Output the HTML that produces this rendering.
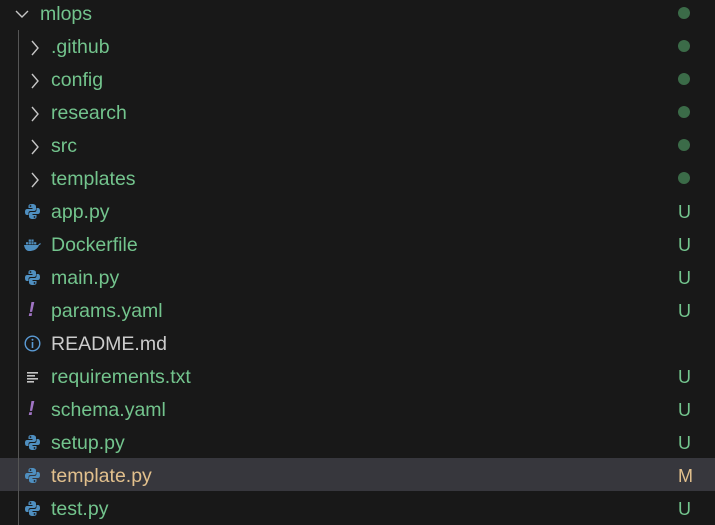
<!DOCTYPE html>
<html><head><meta charset="utf-8"><style>
html,body{margin:0;padding:0;width:715px;height:525px;overflow:hidden;background:#181818;}
body{position:relative;font-family:"Liberation Sans",sans-serif;font-size:19.5px;}
.row{position:absolute;left:0;width:715px;height:33px;}
.row .t{position:absolute;top:6px;left:51px;color:#73c48d;line-height:22px;}
.row .b{position:absolute;right:24px;top:6px;line-height:22px;color:#73c48d;font-size:18px;}
.dot{position:absolute;left:678px;top:10px;width:12px;height:12px;border-radius:50%;background:#3b6b48;}
.ic{position:absolute;left:24px;top:8px;width:17px;height:17px;}
.chev{position:absolute;left:30px;top:10px;}
.guide{position:absolute;left:18px;top:30px;width:1px;height:495px;background:#555;}
</style></head><body>
<div class="row" style="top:458px;background:#37373d"></div>
<div class="guide"></div>

<div class="row" style="top:-3px">
<svg class="chev" style="left:14px;top:11px" width="16" height="12" viewBox="0 0 16 12"><path d="M2 3 L8 9 L14 3" stroke="#c5c5c5" stroke-width="1.4" fill="none"/></svg>
<span class="t" style="left:40px">mlops</span><div class="dot"></div></div>

<div class="row" style="top:30px"><svg class="chev" width="10" height="16" viewBox="0 0 10 16"><path d="M2 1 L8 8 L2 15" stroke="#c5c5c5" stroke-width="1.4" fill="none"/></svg><span class="t">.github</span><div class="dot"></div></div>
<div class="row" style="top:63px"><svg class="chev" width="10" height="16" viewBox="0 0 10 16"><path d="M2 1 L8 8 L2 15" stroke="#c5c5c5" stroke-width="1.4" fill="none"/></svg><span class="t">config</span><div class="dot"></div></div>
<div class="row" style="top:96px"><svg class="chev" width="10" height="16" viewBox="0 0 10 16"><path d="M2 1 L8 8 L2 15" stroke="#c5c5c5" stroke-width="1.4" fill="none"/></svg><span class="t">research</span><div class="dot"></div></div>
<div class="row" style="top:129px"><svg class="chev" width="10" height="16" viewBox="0 0 10 16"><path d="M2 1 L8 8 L2 15" stroke="#c5c5c5" stroke-width="1.4" fill="none"/></svg><span class="t">src</span><div class="dot"></div></div>
<div class="row" style="top:162px"><svg class="chev" width="10" height="16" viewBox="0 0 10 16"><path d="M2 1 L8 8 L2 15" stroke="#c5c5c5" stroke-width="1.4" fill="none"/></svg><span class="t">templates</span><div class="dot"></div></div>

<svg width="0" height="0" style="position:absolute"><defs>
<g id="py"><path d="M8 1 C4.5 1 4.5 2.5 4.5 3.5 V5 H8.5 V6 H3 C1.5 6 1 7.5 1 9 C1 10.5 1.5 12 3 12 H4.5 V10 C4.5 8.8 5.3 8 6.5 8 H10 C11.2 8 12 7.2 12 6 V3.5 C12 2 10.5 1 8 1Z" fill="#4f8fc0"/><path d="M9 16 C12.5 16 12.5 14.5 12.5 13.5 V12 H8.5 V11 H14 C15.5 11 16 9.5 16 8 C16 6.5 15.5 5 14 5 H12.5 V7 C12.5 8.2 11.7 9 10.5 9 H7 C5.8 9 5 9.8 5 11 V13.5 C5 15 6.5 16 9 16Z" fill="#4f8fc0"/><circle cx="6.5" cy="3" r="0.9" fill="#181818"/><circle cx="10.5" cy="14" r="0.9" fill="#181818"/></g>
</defs></svg>

<div class="row" style="top:195px"><svg class="ic" viewBox="0 0 17 17"><use href="#py"/></svg><span class="t">app.py</span><span class="b">U</span></div>
<div class="row" style="top:228px"><svg class="ic" viewBox="0 0 17 17"><path d="M0 9 H14 C15 7.5 16 7 17 7.5 C16.5 8.5 16 9 15 9.2 C13.5 13 10 15 5 15 C2 15 0.5 12 0 9Z" fill="#4f8fc0"/><rect x="2" y="6.2" width="2.2" height="2.2" fill="#4f8fc0"/><rect x="4.7" y="6.2" width="2.2" height="2.2" fill="#4f8fc0"/><rect x="7.4" y="6.2" width="2.2" height="2.2" fill="#4f8fc0"/><rect x="4.7" y="3.5" width="2.2" height="2.2" fill="#4f8fc0"/><rect x="7.4" y="3.5" width="2.2" height="2.2" fill="#4f8fc0"/><rect x="10.1" y="6.2" width="2.2" height="2.2" fill="#4f8fc0"/></svg><span class="t">Dockerfile</span><span class="b">U</span></div>
<div class="row" style="top:261px"><svg class="ic" viewBox="0 0 17 17"><use href="#py"/></svg><span class="t">main.py</span><span class="b">U</span></div>
<div class="row" style="top:294px"><span style="position:absolute;left:28px;top:5px;color:#a074c4;font-style:italic;font-weight:bold;font-size:20px">!</span><span class="t">params.yaml</span><span class="b">U</span></div>
<div class="row" style="top:327px"><svg class="ic" viewBox="0 0 17 17"><circle cx="8.5" cy="8.5" r="7.3" stroke="#5b9bd5" stroke-width="1.4" fill="none"/><rect x="7.7" y="7" width="1.6" height="6" fill="#5b9bd5"/><circle cx="8.5" cy="4.7" r="1" fill="#5b9bd5"/></svg><span class="t" style="color:#cccccc">README.md</span></div>
<div class="row" style="top:360px"><svg class="ic" viewBox="0 0 17 17"><rect x="3" y="4" width="11" height="1.6" fill="#c5c5c5"/><rect x="3" y="7" width="8" height="1.6" fill="#c5c5c5"/><rect x="3" y="10" width="11" height="1.6" fill="#c5c5c5"/><rect x="3" y="13" width="7" height="1.6" fill="#c5c5c5"/></svg><span class="t">requirements.txt</span><span class="b">U</span></div>
<div class="row" style="top:393px"><span style="position:absolute;left:28px;top:5px;color:#a074c4;font-style:italic;font-weight:bold;font-size:20px">!</span><span class="t">schema.yaml</span><span class="b">U</span></div>
<div class="row" style="top:426px"><svg class="ic" viewBox="0 0 17 17"><use href="#py"/></svg><span class="t">setup.py</span><span class="b">U</span></div>
<div class="row" style="top:459px"><svg class="ic" viewBox="0 0 17 17"><use href="#py"/></svg><span class="t" style="color:#e2c08d">template.py</span><span class="b" style="color:#e2c08d;right:22px">M</span></div>
<div class="row" style="top:492px"><svg class="ic" viewBox="0 0 17 17"><use href="#py"/></svg><span class="t">test.py</span><span class="b">U</span></div>
</body></html>
